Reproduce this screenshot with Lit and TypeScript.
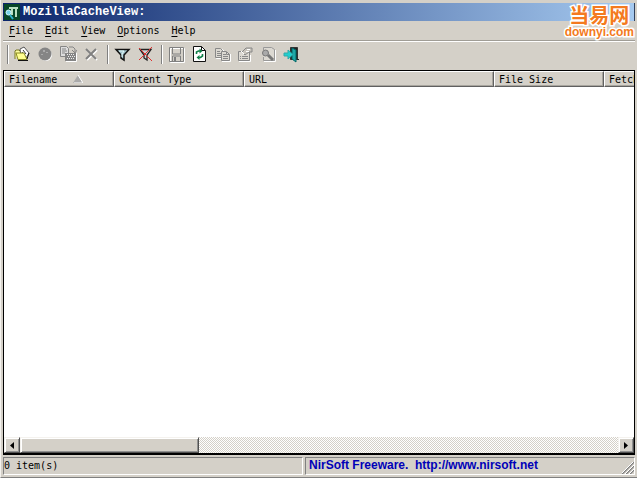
import { LitElement, html, css, svg } from "lit";
import { customElement } from "lit/decorators.js";

const icons: Record<string, unknown> = {
  open: svg`<path d="M1 13V5l1-1h3l1 1h2" fill="#ffffa0" stroke="#777722"/><path d="M6 3l4-2 5 6-3 5H7z" fill="#fff" stroke="#555"/><path d="M9 4l3 4M8 6l2 3" stroke="#333"/><path d="M2 7h8l3 6.500H4z" fill="#ffff90" stroke="#888820"/><path d="M4 14.500h10M13 13l2-6" stroke="#111"/>`,
  ball: svg`<circle cx="9" cy="9" r="6" fill="#fff"/><circle cx="8" cy="8" r="6.500" fill="#858585"/><path d="M6 4h2v2H6zM9 6h2v1H9zM4 8h2v1H4z" fill="#aaa"/>`,
  copyitems: svg`<path d="M.5.5h6l2 2v8h-8z" fill="#ddd" stroke="#858585"/><path d="M2 3h4M2 5h5M2 7h3M9 1h4l2 2v3M12 4l3 3 2-3" fill="none" stroke="#858585"/><path d="M5 7h11v8H5z" fill="#858585"/><path d="M7 8h1v1H7zm2 0h1v1H9zm2 0h1v1h-1zm2 0h1v1h-1zm-5 2h1v1H8zm2 0h1v1h-1zm2 0h1v1h-1zm2 0h1v1h-1zm-7 2h1v1H7zm2 0h1v1H9zm2 0h1v1h-1zm2 0h1v1h-1z" fill="#eee"/><path d="M6 15.500h10.500V7" fill="none" stroke="#fff"/>`,
  remove: svg`<path d="M4 4l10 10M14 4L4 14" stroke="#fff" stroke-width="2"/><path d="M3 3l10 10M13 3L3 13" stroke="#808080" stroke-width="2"/>`,
  filter: svg`<path d="M2 3.500h13L10 9v5l-3-2V9z" fill="#9fc0c8" stroke="#111" stroke-width="1.500"/><path d="M5 5h5L8 8v3" fill="none" stroke="#e6ffff"/>`,
  nofilter: svg`<path d="M3 3.500h11L10 9v5l-3-2V9z" fill="#ccd4d4" stroke="#222" stroke-width="1.300"/><path d="M2 2l13 13M15 1L2 14" stroke="#dd3030"/>`,
  save: svg`<path d="M2.500 2.500h14v14h-14z" fill="none" stroke="#fff"/><path d="M1.500 1.500h14v14h-14zM4.500 2v6h8V2M4.500 15v-5h8v5" fill="none" stroke="#808080"/><path d="M6 11h2v4H6z" fill="#808080"/>`,
  refresh: svg`<path d="M2.500.5h8l4 4v11h-12z" fill="#fff" stroke="#111"/><path d="M10.500.5v4h4" fill="none" stroke="#111"/><path d="M5.500 8V6l2-1H9M11.500 8v2l-2 1.500H8" fill="none" stroke="#108048" stroke-width="1.600"/><path d="M8.500 2.500l3 2.500-3 2.500zM8.500 9l-3 2.500 3 2.500z" fill="#108048"/>`,
  copy: svg`<path d="M2.500 3.500h6l2 2v7h-8z" fill="none" stroke="#fff"/><path d="M1.500 2.500h5l2 2v7h-7z" fill="#dcd9d2" stroke="#888"/><path d="M3 5.500h3M3 7.500h4M3 9.500h4" stroke="#888"/><path d="M7.500 5.500h5l3 3v6h-8z" fill="#dcd9d2" stroke="#888"/><path d="M9 8.500h3M9 10.500h5M9 12.500h5M12.500 6v2.500h3" fill="none" stroke="#888"/><path d="M8 15.500h8.500V8" fill="none" stroke="#fff"/>`,
  props: svg`<path d="M2 15.500h11.500V9" fill="none" stroke="#fff"/><path d="M1.500 5.500h11v9h-11z" fill="#dcd9d2" stroke="#888"/><path d="M3 10.500h1M5 10.500h6M3 12.500h1M5 12.500h6" stroke="#888"/><path d="M5 6l4-4h6v4h-3L8 9z" fill="#c8c4bc" stroke="#888"/><path d="M10 3.500h3M9 5.500h3M4 5l3 3" stroke="#fff"/>`,
  find: svg`<path d="M3.500 4V1.500h8l3 2v11H3.500V11" fill="#dcd9d2" stroke="#999"/><circle cx="5.500" cy="7" r="3" fill="#aaa" stroke="#777"/><path d="M8 9l5 5" stroke="#777" stroke-width="3"/><path d="M4 15.500h11.500V4" fill="none" stroke="#fff"/>`,
  exit: svg`<path d="M7.500 1.500h7v12h-7z" fill="#222" stroke="#333"/><path d="M9 2l4 2v12l-4-3z" fill="#20a8a8" stroke="#066"/><path d="M1 7h4V4l5 4.500L5 13v-3H1z" fill="#20d0d0" stroke="#30a8a8"/><path d="M14 13.500h2" stroke="#222"/>`,
};

const tools: [string, string][][] = [
  [["open", "Select Cache Folder"], ["ball", "Stop"], ["copyitems", "Copy Selected Cache Files"], ["remove", "Delete Selected"]],
  [["filter", "Filter"], ["nofilter", "Clear Filter"]],
  [["save", "Save"], ["refresh", "Refresh"], ["copy", "Copy"], ["props", "Properties"], ["find", "Find"], ["exit", "Exit"]],
];

@customElement("app-root")
export class AppRoot extends LitElement {
  static styles = css`
    :host {
      display: block;
      font: 10px/14px "DejaVu Sans Mono", "Liberation Mono", monospace;
      color: #000;
    }
    * { box-sizing: border-box; }
    .window {
      min-height: 100vh;
      display: flex;
      flex-direction: column;
      background: #d4d0c8;
      padding: 3px 2px 2px;
      border-left: 1px solid #f4f2ee;
      border-bottom: 1px solid #808080;
      position: relative;
    }
    .title {
      height: 18px;
      display: flex;
      align-items: center;
      gap: 3px;
      padding-left: 1px;
      background: linear-gradient(to right, #0a246a, #a6caf0);
      border-right: 1px solid #30405c;
      color: #fff;
    }
    h1 { margin: 0; font: bold 12px/16px "Liberation Mono", "Courier New", monospace; }
    .title svg { width: 16px; height: 16px; flex: none; }
    .menu {
      height: 21px;
      display: flex;
      align-items: center;
      border-bottom: 1px solid #fff;
      box-shadow: inset 0 -1px #a09d96;
    }
    button {
      font: inherit;
      color: inherit;
      background: none;
      border: 0;
      margin: 0;
      padding: 0;
    }
    .menu button { padding: 0 6px; height: 18px; }
    u { text-underline-offset: 2px; }
    .toolbar { height: 28px; display: flex; align-items: center; padding: 0 0 3px 4px; }
    .group { display: flex; border-left: 1px solid #808080; box-shadow: inset 1px 0 #fff; padding: 0 4px 0 3px; height: 19px; align-items: center; }
    .group button { width: 23px; height: 19px; display: grid; place-items: center; }
    .group svg { width: 17px; height: 17px; }
    .list {
      flex: 1;
      display: flex;
      flex-direction: column;
      background: #fff;
      border: 1px solid #000;
      border-bottom-width: 2px;
      overflow: hidden;
    }
    .view { flex: 1; overflow: hidden; }
    table { width: 700px; table-layout: fixed; border-collapse: separate; border-spacing: 0; }
    th {
      height: 16px;
      padding: 1px 4px 0;
      line-height: 13px;
      font-weight: normal;
      text-align: left;
      white-space: nowrap;
      background: #d4d0c8;
      border: 1px solid;
      border-color: #fff #606060 #606060 #fff;
      box-shadow: inset -1px -1px #a8a59e;
    }
    .name { width: 110px; }
    .type { width: 130px; }
    .url { width: 250px; }
    .size { width: 110px; }
    .sort { width: 10px; height: 8px; margin-left: 16px; }
    .scroll {
      height: 16px;
      display: flex;
      background: repeating-conic-gradient(#d4d0c8 0 25%, #fff 0 50%) 0 0 / 2px 2px;
    }
    .arrow, .thumb {
      background: #d4d0c8;
      border: 1px solid;
      border-color: #f4f2ee #505050 #505050 #f4f2ee;
      box-shadow: inset 1px 1px #fff, inset -1px -1px #909090;
    }
    .arrow { width: 16px; display: grid; place-items: center; flex: none; }
    .arrow svg { width: 4px; height: 7px; }
    .track { flex: 1; display: flex; }
    .thumb { width: 30%; }
    .status { display: grid; grid-template-columns: 300px 1fr; gap: 2px; padding-top: 2px; }
    .cell {
      height: 18px;
      display: flex;
      align-items: center;
      border: 1px solid;
      border-color: #808080 #fff #fff #808080;
    }
    .cell.right { justify-content: space-between; }
    .cell a {
      font: bold 12px/14px "Liberation Sans", Arial, sans-serif;
      color: #0000b8;
      text-decoration: none;
      padding: 0 0 2px 3px;
      white-space: pre;
    }
    .grip { width: 12px; height: 12px; align-self: end; }
    .mark {
      position: absolute;
      top: 4px;
      right: 3px;
      display: flex;
      flex-direction: column;
      align-items: center;
      color: #f47a20;
      paint-order: stroke fill;
      -webkit-text-stroke: 3px #fff;
    }
    .brand { font: bold 20px/22px "Noto Sans CJK SC", sans-serif; }
    .domain { font: bold 12px/12px "Liberation Sans", Arial, sans-serif; }
  `;

  render() {
    return html`<main class="window">
      <header class="title">
        <svg viewBox="0 0 16 16"><path d="M0 0h16v16H0z" fill="#084828"/><path d="M5 3h9v2h-1v8h-2V5H9v6H7V5H5z" fill="#b8e0c0"/><circle cx="4.500" cy="8.500" r="2.500" fill="#79d6e8" stroke="#d5faff"/><path d="M6 11l3 4" stroke="#2cb1ca" stroke-width="2"/></svg>
        <h1>MozillaCacheView:</h1>
      </header>
      <nav class="menu">
        ${["File", "Edit", "View", "Options", "Help"].map((m) => html`<button><u>${m[0]}</u>${m.slice(1)}</button>`)}
      </nav>
      <div class="toolbar">
        ${tools.map((g) => html`<div class="group">${g.map(([id, label]) => html`<button aria-label=${label}><svg viewBox="0 0 17 17">${icons[id]}</svg></button>`)}</div>`)}
      </div>
      <section class="list">
        <div class="view">
          <table>
            <thead><tr>
              <th class="name">Filename<svg class="sort" viewBox="0 0 10 8"><path d="M5 0L0 8h10z" fill="#aaa"/><path d="M5 0l5 8H1" fill="none" stroke="#fff"/></svg></th>
              <th class="type">Content Type</th>
              <th class="url">URL</th>
              <th class="size">File Size</th>
              <th>Fetch Count</th>
            </tr></thead>
          </table>
        </div>
        <div class="scroll">
          <button class="arrow" aria-label="Scroll left"><svg viewBox="0 0 4 7"><path d="M4 0v7L0 3.500z"/></svg></button>
          <div class="track"><div class="thumb"></div></div>
          <button class="arrow" aria-label="Scroll right"><svg viewBox="0 0 4 7"><path d="M0 0v7l4-3.500z"/></svg></button>
        </div>
      </section>
      <footer class="status">
        <div class="cell">0 item(s)</div>
        <div class="cell right"><a href="http://www.nirsoft.net">NirSoft Freeware.  http://www.nirsoft.net</a>
          <svg class="grip" viewBox="0 0 12 12"><path d="M0 12L12 0M4 12l8-8M8 12l4-4" stroke="#808080" stroke-width="1.500"/><path d="M-1 12L12-1M3 12l9-9M7 12l5-5" stroke="#fff"/></svg>
        </div>
      </footer>
      <div class="mark"><span class="brand">当易网</span><span class="domain">downyi.com</span></div>
    </main>`;
  }
}
